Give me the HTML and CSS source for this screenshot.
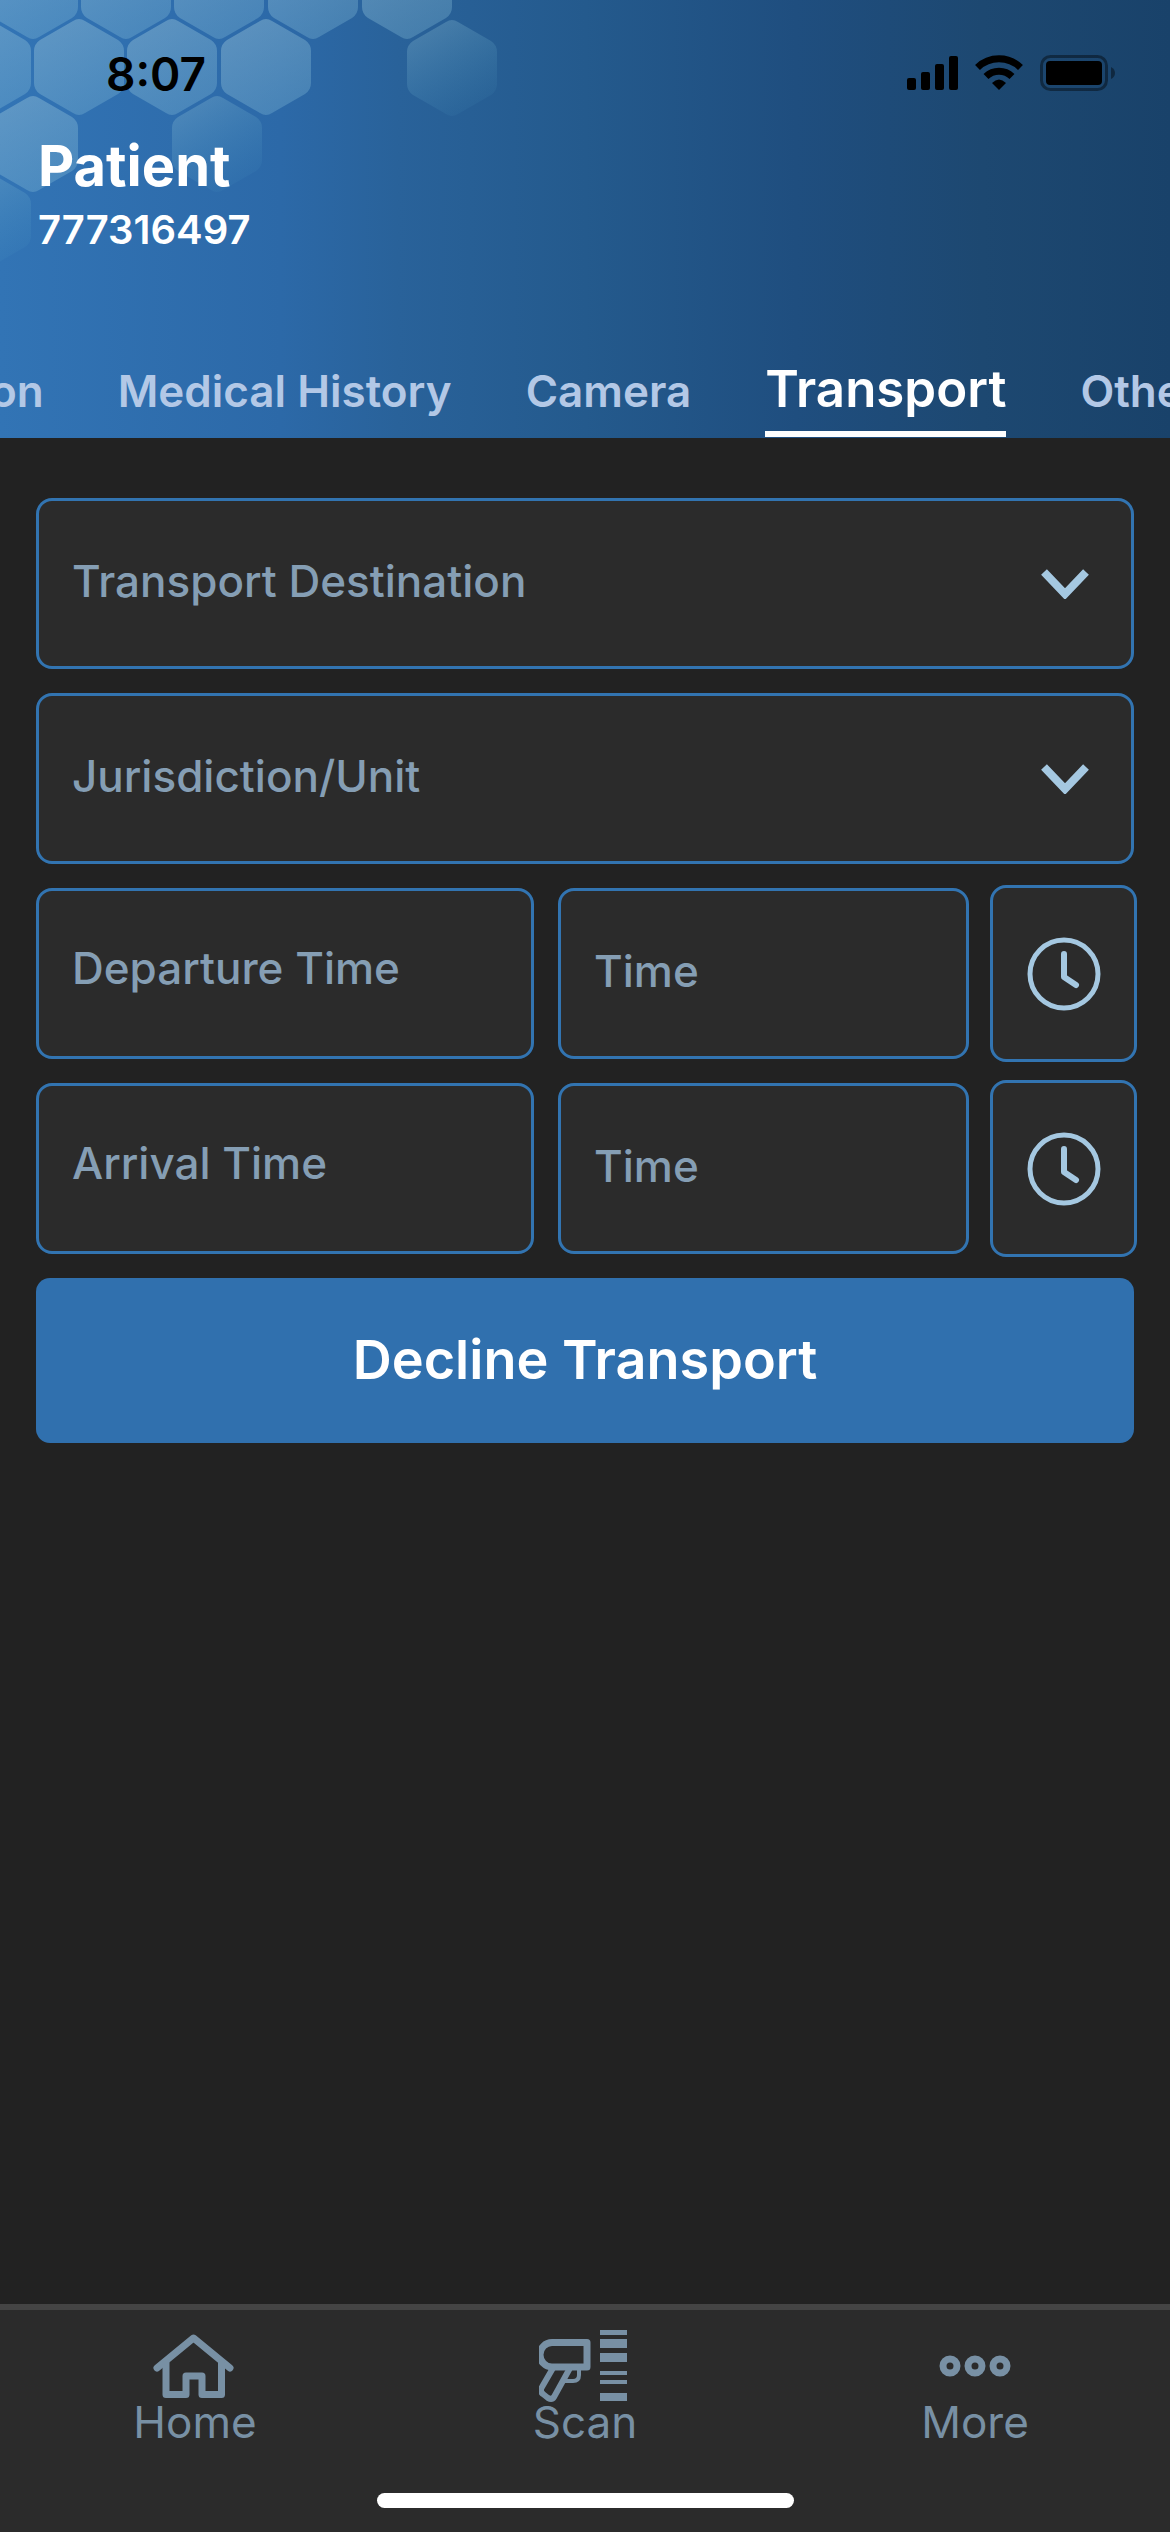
FILE: index.html
```html
<!DOCTYPE html>
<html lang="en">
<head>
<meta charset="utf-8">
<meta name="viewport" content="width=device-width, initial-scale=1">
<title>Patient 777316497 – Transport</title>
<link rel="stylesheet" href="styles.css">
</head>
<body>
<header class="header">
  <svg class="hexes" width="510" height="280" viewBox="0 0 510 280" aria-hidden="true">
    <defs>
      <linearGradient id="soft" x1="0" y1="0" x2="0.5" y2="1">
        <stop offset="0" stop-color="#a4cbdc" stop-opacity="0.42"/>
        <stop offset="1" stop-color="#8cc4dc" stop-opacity="0.3"/>
      </linearGradient>
      <linearGradient id="fade" x1="0.1" y1="0" x2="0.6" y2="1">
        <stop offset="0" stop-color="#9cc8d8" stop-opacity="0.32"/>
        <stop offset="1" stop-color="#5cb0d0" stop-opacity="0.06"/>
      </linearGradient>
      <path id="hex" d="M-6-46Q0-50 6-46L39-27Q45-23 45-16V16Q45 23 39 27L6 46Q0 50-6 46L-39 27Q-45 23-45 16V-16Q-45-23-39-27Z"/>
    </defs>
    <g fill="url(#soft)">
      <use href="#hex" x="33" y="-9"/>
      <use href="#hex" x="126" y="-9"/>
      <use href="#hex" x="219" y="-9"/>
      <use href="#hex" x="313" y="-9"/>
      <use href="#hex" x="407" y="-9"/>
      <use href="#hex" x="-14" y="67"/>
      <use href="#hex" x="79" y="67"/>
      <use href="#hex" x="172" y="67"/>
      <use href="#hex" x="266" y="67"/>
      <use href="#hex" x="33" y="144"/>
    </g>
    <g fill="url(#fade)">
      <use href="#hex" x="452" y="68"/>
      <use href="#hex" x="217" y="144"/>
      <use href="#hex" x="-14" y="220"/>
    </g>
  </svg>
  <div class="status">
    <span class="status-time">8:07</span>
    <svg class="status-icons" width="210" height="40" viewBox="0 0 210 40" role="img" aria-label="Signal, Wi-Fi and battery">
      <rect x="1" y="24" width="9" height="12" rx="2"/>
      <rect x="15" y="18" width="9" height="18" rx="2"/>
      <rect x="29" y="10" width="9" height="26" rx="2"/>
      <rect x="43" y="2" width="9" height="34" rx="2"/>
      <g fill="none" stroke="#000" stroke-width="7">
        <path d="M71.500 13.500A31 31 0 0 1 114.500 13.500"/>
        <path d="M80 22.500A18.500 18.500 0 0 1 106 22.500"/>
      </g>
      <path d="M93 36L86 29Q93 22 100 29Z"/>
      <rect x="135.500" y="2.500" width="65" height="33" rx="9" fill="none" stroke="#000" stroke-opacity="0.4" stroke-width="3"/>
      <rect x="140" y="7" width="56" height="24" rx="4"/>
      <path d="M205 13Q209 15 209 19T205 25Z" fill-opacity="0.4"/>
    </svg>
  </div>
  <div class="patient">
    <h1 class="patient-title">Patient</h1>
    <p class="patient-id">777316497</p>
  </div>
  <nav class="tabs" aria-label="Patient sections">
    <a class="tab tab-cut" href="#">on</a>
    <a class="tab" href="#">Medical History</a>
    <a class="tab" href="#">Camera</a>
    <a class="tab tab-active" href="#" aria-current="page">Transport</a>
    <a class="tab" href="#">Other</a>
  </nav>
</header>

<main class="main">
  <form class="form">
    <div class="select-box">
      <select class="field" aria-label="Transport Destination"><option>Transport Destination</option></select>
      <svg class="chevron" width="48" height="30" viewBox="0 0 48 30" aria-hidden="true"><path d="M3 3L24 25L45 3"/></svg>
    </div>
    <div class="select-box">
      <select class="field" aria-label="Jurisdiction/Unit"><option>Jurisdiction/Unit</option></select>
      <svg class="chevron" width="48" height="30" viewBox="0 0 48 30" aria-hidden="true"><path d="M3 3L24 25L45 3"/></svg>
    </div>
    <div class="time-row">
      <input class="field field-date" type="text" placeholder="Departure Time" aria-label="Departure Time">
      <input class="field" type="text" placeholder="Time" aria-label="Departure clock time">
      <button class="clock" type="button" aria-label="Set departure time">
        <svg width="74" height="74" viewBox="0 0 74 74" aria-hidden="true"><circle cx="37" cy="37" r="34"/><path d="M37 17V40L49 48"/></svg>
      </button>
    </div>
    <div class="time-row">
      <input class="field field-date" type="text" placeholder="Arrival Time" aria-label="Arrival Time">
      <input class="field" type="text" placeholder="Time" aria-label="Arrival clock time">
      <button class="clock" type="button" aria-label="Set arrival time">
        <svg width="74" height="74" viewBox="0 0 74 74" aria-hidden="true"><circle cx="37" cy="37" r="34"/><path d="M37 17V40L49 48"/></svg>
      </button>
    </div>
    <button class="decline" type="button">Decline Transport</button>
  </form>
</main>

<footer class="footer">
  <nav class="bottom-nav" aria-label="Main">
    <a class="nav-item" href="#">
      <svg width="92" height="72" viewBox="0 0 92 72" aria-hidden="true">
        <g fill="none" stroke="currentColor" stroke-width="7" stroke-linecap="round" stroke-linejoin="round">
          <path d="M8 38L44.500 8L81 38"/>
          <path d="M17 33V64.500H37V46H53V64.500H72.500V33"/>
        </g>
      </svg>
      <span>Home</span>
    </a>
    <a class="nav-item" href="#">
      <svg width="92" height="72" viewBox="0 0 92 72" aria-hidden="true">
        <g fill="none" stroke="currentColor" stroke-linejoin="round">
          <path stroke-width="7" d="M13 12.500H48V37H13A12 12.250 0 0 1 13 12.500Z"/>
          <path stroke-width="6" d="M14 38L3 57Q0 61 4 64L9 68Q13 70 15 67L31 38"/>
          <path stroke-width="4" d="M40 38V45Q40 51 34 51H25"/>
        </g>
        <path d="M61 0H88V5H61ZM61 9H88V18H61ZM61 23H88V32H61ZM61 41H88V45H61ZM61 50H88V54H61ZM61 63H88V71H61Z" fill="currentColor"/>
      </svg>
      <span>Scan</span>
    </a>
    <a class="nav-item" href="#">
      <svg width="92" height="72" viewBox="0 0 92 72" aria-hidden="true">
        <g fill="none" stroke="currentColor" stroke-width="7">
          <circle cx="21" cy="36" r="7"/><circle cx="46" cy="36" r="7"/><circle cx="71" cy="36" r="7"/>
        </g>
      </svg>
      <span>More</span>
    </a>
  </nav>
  <div class="home-bar"></div>
</footer>
</body>
</html>
```
FILE: styles.css
```css
* {
  box-sizing: border-box;
}

body {
  margin: 0;
  min-height: 100vh;
  display: flex;
  flex-direction: column;
  background: #222222;
  font-family: Inter, "Open Sans", sans-serif;
  font-size: 44px;
}

a {
  color: inherit;
  text-decoration: none;
}

.header {
  position: relative;
  overflow: hidden;
  background: linear-gradient(90deg, #3274b5 0%, #2c69a8 24%, #29629a 34%, #245a8d 50%, #1f4e7f 68%, #1d4871 84%, #19426a 100%);
}

/* honeycomb decoration behind the header content */
.hexes {
  position: absolute;
  top: 0;
  left: 0;
}

.status,
.patient,
.tabs {
  position: relative;
}

.status {
  display: flex;
  justify-content: space-between;
  align-items: center;
  height: 132px;
  padding: 16px 54px 0 106px;
}

.status-time {
  font-size: 46px;
  font-weight: 600;
  color: #000000;
}

.patient {
  padding: 0 38px;
  color: #ffffff;
}

.patient-title {
  margin: 0;
  font-size: 56px;
  font-weight: 700;
  line-height: 68px;
}

.patient-id {
  margin: 0;
  font-size: 40px;
  font-weight: 600;
  line-height: 60px;
}

.tabs {
  display: flex;
  align-items: flex-end;
  gap: 74px;
  height: 178px;
  overflow: hidden;
  color: #b3c8e6;
  font-weight: 600;
  white-space: nowrap;
}

.tab {
  line-height: 56px;
  padding-bottom: 19px;
}

.tab-cut {
  margin-left: -10px;
}

.tab-active {
  color: #ffffff;
  font-size: 51px;
  padding-bottom: 14px;
  border-bottom: 6px solid #ffffff;
  margin-bottom: 1px;
}

.main {
  flex: 1;
  padding: 60px 36px;
}

.form {
  display: flex;
  flex-direction: column;
  gap: 24px;
}

.field {
  width: 100%;
  min-width: 0;
  height: 171px;
  margin: 0;
  padding: 0 33px 6px;
  border: 3px solid #3274b1;
  border-radius: 16px;
  background: #2b2b2b;
  color: #859eb4;
  font: inherit;
  font-weight: 500;
  appearance: none;
}

.field::placeholder {
  color: #859eb4;
  opacity: 1;
}

.field-date {
  padding-bottom: 12px;
}

.select-box {
  display: grid;
  align-items: center;
}

.select-box > * {
  grid-area: 1 / 1;
}

.chevron {
  justify-self: end;
  margin-right: 45px;
  fill: none;
  stroke: #a5c8e1;
  stroke-width: 8;
  pointer-events: none;
}

.time-row {
  display: grid;
  grid-template-columns: 498fr 411fr 141fr;
  gap: 24px;
}

.clock {
  display: flex;
  align-items: center;
  justify-content: center;
  margin: -3px;
  padding: 0;
  border: 3px solid #3274b1;
  border-radius: 16px;
  background: #2b2b2b;
}

.clock svg {
  fill: none;
  stroke: #a5c8e1;
  stroke-width: 5;
  stroke-linecap: round;
  stroke-linejoin: round;
}

.clock path {
  stroke-width: 6;
}

.decline {
  height: 165px;
  padding: 0 0 2px;
  border: 0;
  border-radius: 14px;
  background: #3070ae;
  color: #ffffff;
  font: inherit;
  font-size: 54px;
  font-weight: 600;
}

.footer {
  border-top: 6px solid #444444;
  background: #2b2b2b;
  padding: 20px 0 24px;
  color: #7890a4;
}

.bottom-nav {
  display: grid;
  grid-template-columns: repeat(3, 1fr);
}

.nav-item {
  display: flex;
  flex-direction: column;
  align-items: center;
  line-height: 40px;
  height: 163px;
}

.home-bar {
  width: 417px;
  max-width: 60%;
  height: 15px;
  margin: 0 auto;
  border-radius: 8px;
  background: #ffffff;
}
```
